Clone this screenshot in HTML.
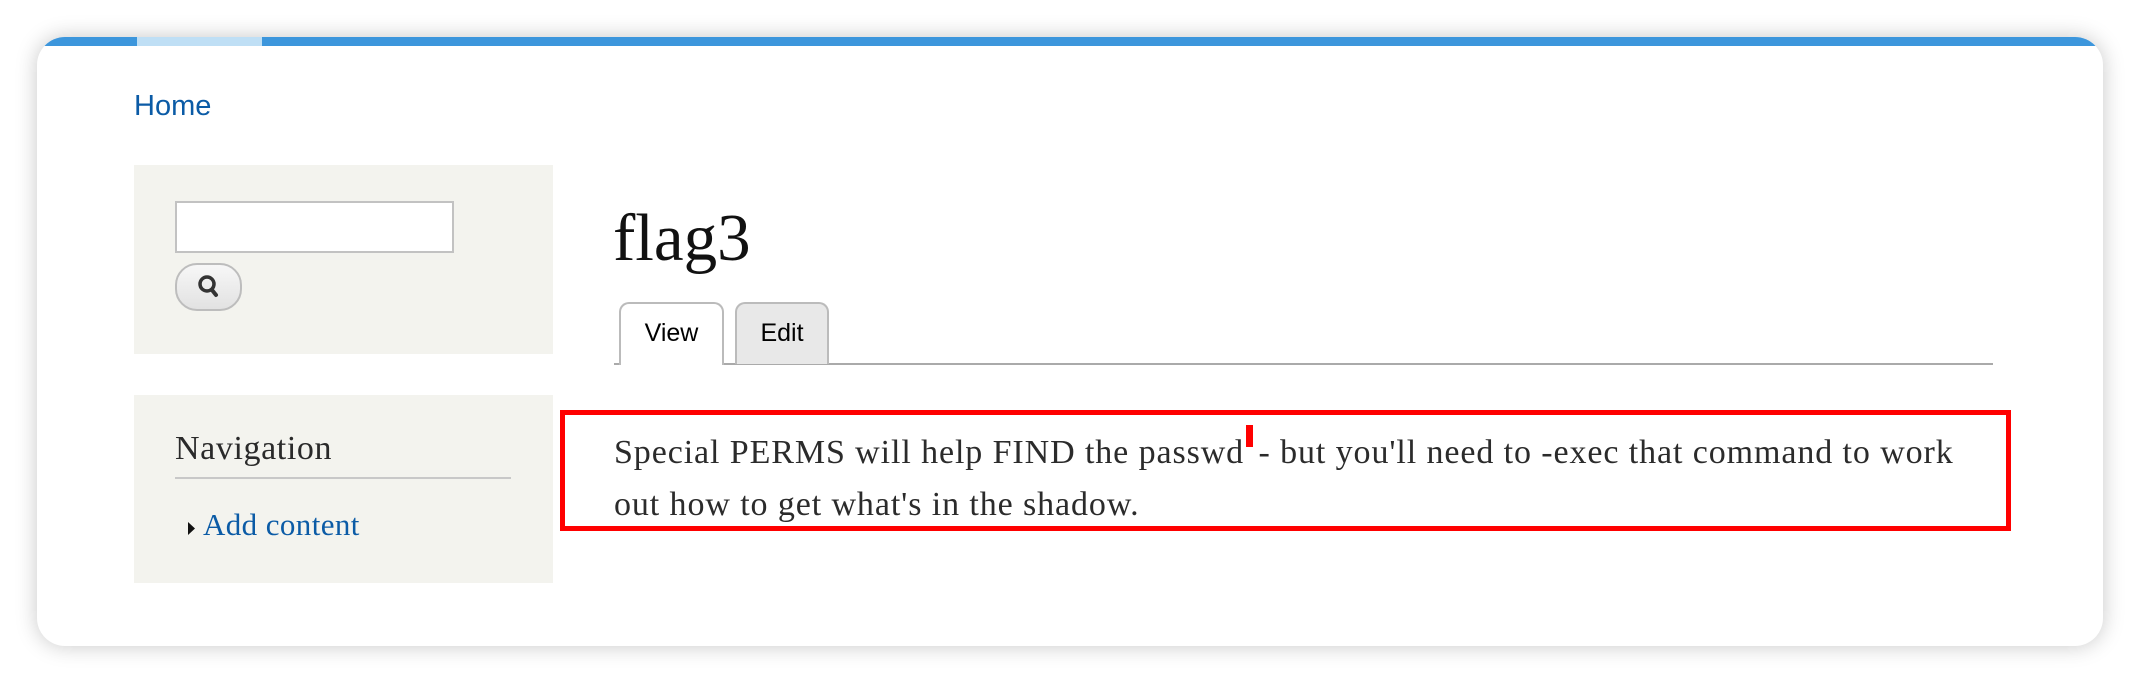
<!DOCTYPE html>
<html><head><meta charset="utf-8"><style>
*{margin:0;padding:0;box-sizing:border-box}
body{width:2140px;height:684px;background:#fff;position:relative;overflow:hidden;font-family:"Liberation Serif",serif}
.card{position:absolute;left:37px;top:37px;width:2066px;height:609px;background:#fff;border-radius:28px;box-shadow:0 0 22px rgba(0,0,0,.22);overflow:hidden}
.bar{position:absolute;left:0;top:0;width:100%;height:9px;background:#3c96dc}
.bar2{position:absolute;left:100px;top:0;width:125px;height:9px;background:#bfdff5}
.a{position:absolute}
.mk{display:inline-block;width:7px;height:22px;background:#f00;vertical-align:top;margin-top:-2px;margin-right:-4px;margin-left:2px}
</style></head><body>
<div class="card"><div class="bar"></div><div class="bar2"></div></div>
<div class="a" style="left:134px;top:90px;font:29px 'Liberation Sans',sans-serif;color:#0b5ba6">Home</div>
<div class="a" style="left:134px;top:165px;width:419px;height:189px;background:#f3f3ee"></div>
<div class="a" style="left:175px;top:201px;width:279px;height:52px;background:#fff;border:2px solid #c2c2c2"></div>
<div class="a" style="left:175px;top:263px;width:67px;height:48px;border-radius:22px;border:2px solid #bdbdbd;background:linear-gradient(#f7f7f7,#e2e2e2)">
<svg width="63" height="44" viewBox="0 0 63 44" style="position:absolute;left:0;top:0"><circle cx="30" cy="19" r="7" fill="none" stroke="#333" stroke-width="3.5"/><line x1="35" y1="25" x2="39" y2="30" stroke="#333" stroke-width="4" stroke-linecap="round"/></svg></div>
<div class="a" style="left:134px;top:395px;width:419px;height:188px;background:#f3f3ee"></div>
<div class="a" style="left:175px;top:429px;font-size:34px;color:#2a2a2a;line-height:40px;letter-spacing:0.6px">Navigation</div>
<div class="a" style="left:175px;top:477px;width:336px;height:2px;background:#c8c8c8"></div>
<svg class="a" style="left:187px;top:521px" width="10" height="16"><path d="M1 1 L8 7.5 L1 14Z" fill="#111"/></svg>
<div class="a" style="left:203px;top:505px;font-size:31px;color:#0b5ba6;line-height:40px;letter-spacing:0.4px">Add content</div>
<div class="a" style="left:613px;top:198px;font-size:67px;color:#111;line-height:80px">flag3</div>
<div class="a" style="left:614px;top:363px;width:1379px;height:2px;background:#aaa"></div>
<div class="a" style="left:619px;top:302px;width:105px;height:63px;border:2px solid #bbb;border-bottom:none;border-radius:10px 10px 0 0;background:#fff;font:25px 'Liberation Sans',sans-serif;text-align:center;padding-top:15px;color:#000">View</div>
<div class="a" style="left:735px;top:302px;width:94px;height:62px;border:2px solid #bbb;border-bottom:none;border-radius:10px 10px 0 0;background:#e8e8e8;font:25px 'Liberation Sans',sans-serif;text-align:center;padding-top:15px;color:#000">Edit</div>
<div class="a" style="left:560px;top:410px;width:1451px;height:121px;border:5px solid #f00"></div>
<div class="a" style="left:614px;top:427px;font-size:34px;line-height:52px;color:#2b2b2b;white-space:nowrap;letter-spacing:0.9px">Special PERMS will help FIND the passwd<span class="mk"></span> - but you'll need to -exec that command to work<br>out how to get what's in the shadow.</div>
</body></html>
